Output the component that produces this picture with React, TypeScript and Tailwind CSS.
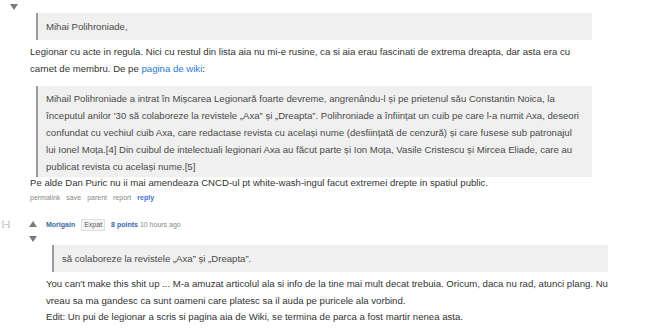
const DownArrow = () => (
  <svg width="8" height="6" viewBox="0 0 8 6" className="block">
    <path d="M0 0 L8 0 L4 6 Z" fill="#7b7b7b" />
  </svg>
);

const UpArrow = () => (
  <svg width="8" height="6" viewBox="0 0 8 6" className="block">
    <path d="M0 6 L8 6 L4 0 Z" fill="#7b7b7b" />
  </svg>
);

const Quote = ({ children, tight }: { children: React.ReactNode; tight?: boolean }) => (
  <blockquote
    className={
      tight
        ? "ml-[6px] border-l-2 border-[#9a9a9a] bg-[#f0f0f0] px-2 pt-[4px] pb-[2px] text-[#4a4a4a]"
        : "ml-[6px] border-l-2 border-[#9a9a9a] bg-[#f0f0f0] px-2 py-[5px] text-[#4a4a4a]"
    }
  >
    {children}
  </blockquote>
);

const App = () => (
  <div className="w-[660px] h-[330px] overflow-hidden bg-white font-['Liberation_Sans',Arial,sans-serif] text-[#333] text-[9.6px] leading-[17px]">
    {/* parent comment, top cut off */}
    <div className="flex">
      <div className="w-[30px] shrink-0 pl-[10px] pt-[4px]">
        <DownArrow />
      </div>
      <div className="w-[562px] pt-[13px]">
        <Quote>Mihai Polihroniade,</Quote>
        <p className="mt-[3px]">
          Legionar cu acte in regula. Nici cu restul din lista aia nu mi-e rusine, ca si aia erau fascinati de
          extrema dreapta, dar asta era cu carnet de membru. De pe{" "}
          <a className="text-[#2a7ad0]">pagina de wiki</a>:
        </p>
        <div className="mt-[9px]">
          <Quote tight>
            Mihail Polihroniade a intrat în Mișcarea Legionară foarte devreme, angrenându-l și pe prietenul său
            Constantin Noica, la începutul anilor '30 să colaboreze la revistele „Axa” și „Dreapta”. Polihroniade a
            înființat un cuib pe care l-a numit Axa, deseori confundat cu vechiul cuib Axa, care redactase revista cu
            același nume (desființată de cenzură) și care fusese sub patronajul lui Ionel Moța.[4] Din cuibul de
            intelectuali legionari Axa au făcut parte și Ion Moța, Vasile Cristescu și Mircea Eliade, care au publicat
            revista cu același nume.[5]
          </Quote>
        </div>
        <p className="-mt-[3px]">
          Pe alde Dan Puric nu ii mai amendeaza CNCD-ul pt white-wash-ingul facut extremei drepte in spatiul public.
        </p>
        <ul className="flex gap-[6px] text-[7px] leading-[14px] text-[#888]">
          <li>permalink</li>
          <li>save</li>
          <li>parent</li>
          <li>report</li>
          <li className="font-bold text-[#4a6fd4]">reply</li>
        </ul>
      </div>
    </div>

    {/* child comment */}
    <div className="mt-[14px] flex">
      <div className="w-[16px] shrink-0 pl-[2px] text-[7px] leading-[10px] text-[#9a9a9a]">[–]</div>
      <div className="w-[30px] shrink-0 flex flex-col gap-[9px] pl-[13px] pt-[2px]">
        <UpArrow />
        <DownArrow />
      </div>
      <div className="w-[562px]">
        <div className="flex items-center gap-[6px] text-[7px] leading-[10px]">
          <span className="font-bold text-[#3b6aa8]">Morigain</span>
          <span className="border border-[#e0e0e0] bg-[#f5f5f5] px-[2px] text-[#555]">Expat</span>
          <span>
            <span className="font-bold text-[#3b6aa8]">8 points</span>{" "}
            <span className="text-[#888]">10 hours ago</span>
          </span>
        </div>
        <div className="mt-[14px]">
          <Quote>să colaboreze la revistele „Axa” și „Dreapta”.</Quote>
        </div>
        <p className="mt-[3px]">
          You can't make this shit up ... M-a amuzat articolul ala si info de la tine mai mult decat trebuia. Oricum,
          daca nu rad, atunci plang. Nu vreau sa ma gandesc ca sunt oameni care platesc sa il auda pe puricele ala
          vorbind.
        </p>
        <p className="-mt-[1px]">Edit: Un pui de legionar a scris si pagina aia de Wiki, se termina de parca a fost martir nenea asta.</p>
      </div>
    </div>
  </div>
);

export default App;
